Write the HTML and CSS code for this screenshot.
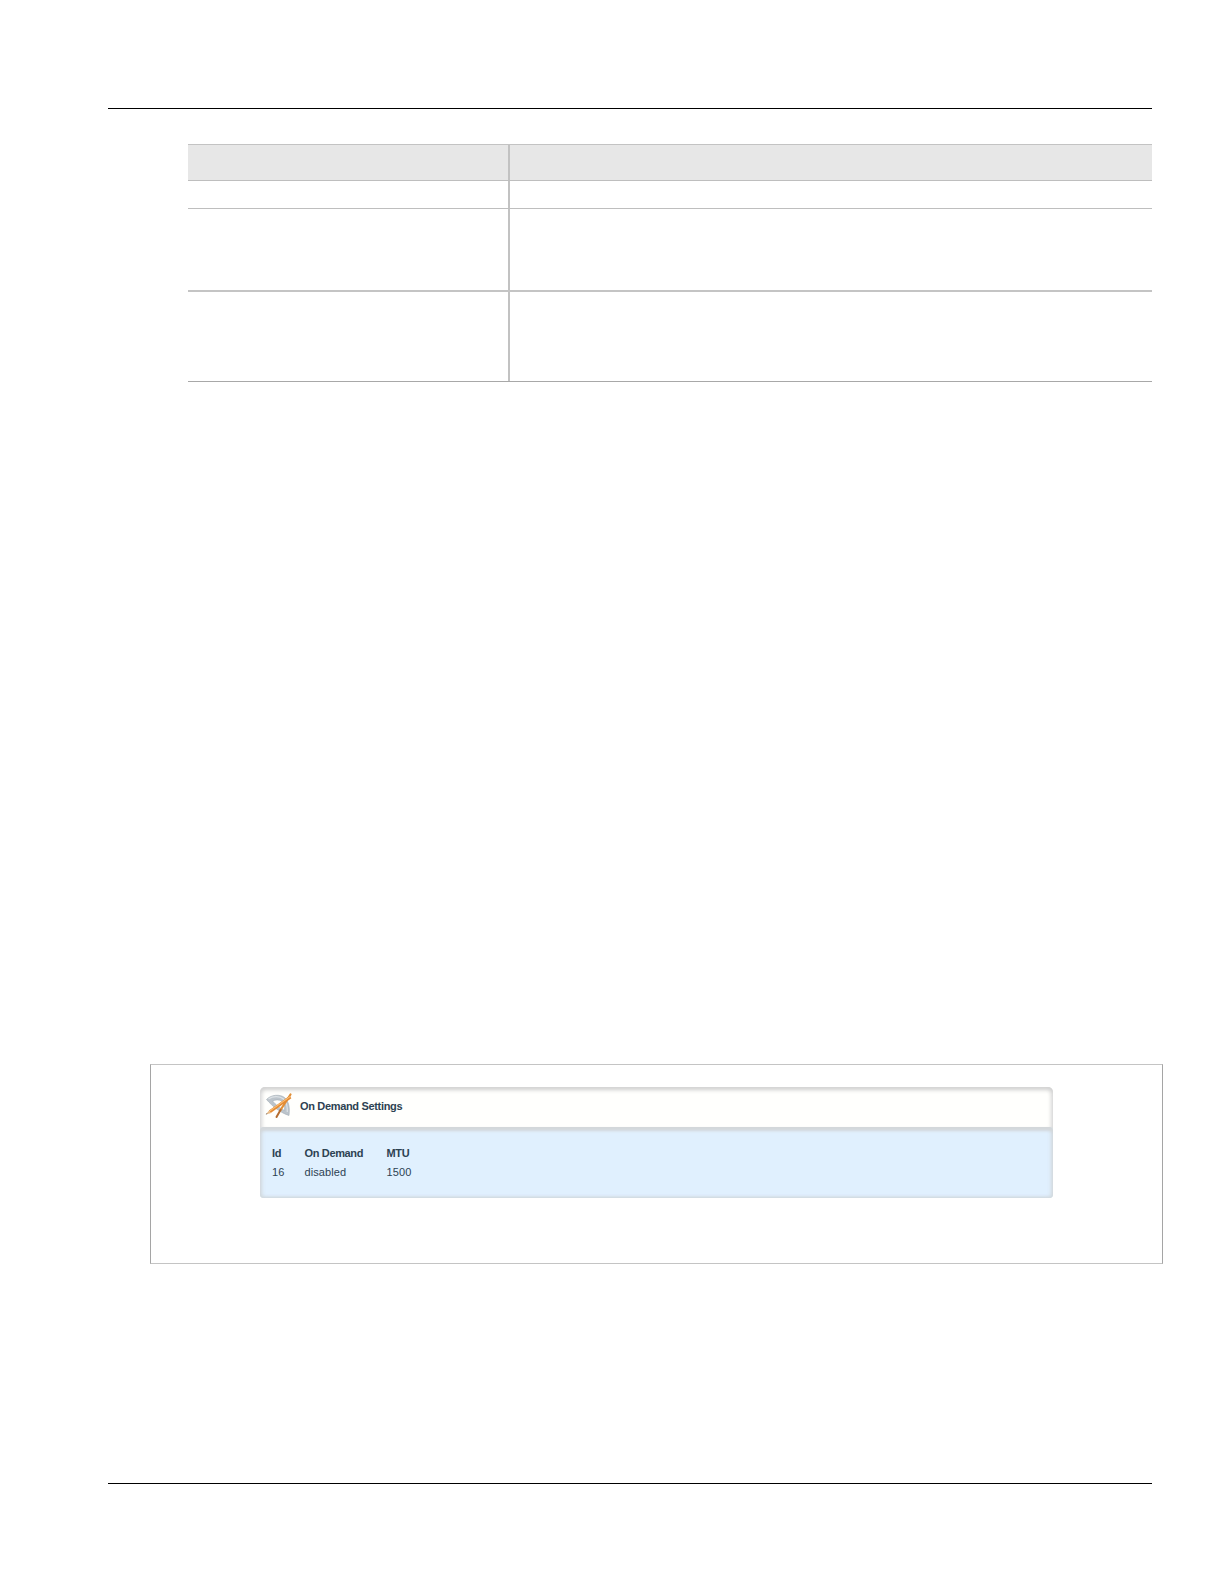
FILE: index.html
```
<!DOCTYPE html>
<html lang="en">
<head>
  <meta charset="UTF-8">
  <meta name="viewport" content="width=device-width, initial-scale=1.0">
  <title>On Demand Settings</title>
  <link rel="stylesheet" href="styles.css">
</head>
<body>

  <div class="page">
    <!-- Parameter table -->
    <div class="params">
      <div class="params-row params-head"><div class="params-name"></div><div class="params-value"></div></div>
      <div class="params-row row-short"><div class="params-name"></div><div class="params-value"></div></div>
      <div class="params-row row-medium"><div class="params-name"></div><div class="params-value"></div></div>
      <div class="params-row row-tall"><div class="params-name"></div><div class="params-value"></div></div>
    </div>

    <!-- Figure -->
    <div class="figure">
      <div class="panel">
        <div class="panel-header">
          <!-- Protractor, pencil and brush -->
          <svg class="panel-icon" width="28" height="28" viewBox="0 0 28 28">
            <path d="M1.5 7.5 C6 2.5 15 2 19.5 5.5 C24 9.5 25 16 24 23.5 C16 21 8 15 1.5 7.5 Z M7.5 9 C10.5 12.5 14.5 16 19.5 18.5 C20 14.5 19 11 16.5 9 C14 7.5 10.5 7.5 7.5 9 Z" fill="#bcc4cb" fill-rule="evenodd" stroke="#a3adb5" stroke-width="0.6"/>
            <path d="M3.5 7 C8 3.8 15 4 18.5 7 C21.5 10 22.5 14 22.3 20" fill="none" stroke="#dde2e6" stroke-width="1.2"/>
            <path d="M25.5 2.5 L15.5 18" stroke="#e08f38" stroke-width="2.2" stroke-linecap="round"/>
            <path d="M15.5 18 L11.5 25" stroke="#b56c30" stroke-width="2" stroke-linecap="round"/>
            <path d="M25.5 5 L4.8 19.8" stroke="#e58a32" stroke-width="3"/>
            <path d="M25 4.6 L4.6 19.1" stroke="#fbc077" stroke-width="1.1"/>
            <path d="M4 18.4 L1 22.2 L5.7 21.2 Z" fill="#e7b985"/>
            <path d="M1.8 21.2 L0.6 22.6 L2.6 22 Z" fill="#54473e"/>
          </svg>
          <span class="panel-title">On Demand Settings</span>
        </div>
        <div class="panel-body">
          <div class="column col-id"><b>Id</b><span>16</span></div>
          <div class="column col-demand"><b>On Demand</b><span>disabled</span></div>
          <div class="column col-mtu"><b>MTU</b><span>1500</span></div>
        </div>
      </div>
    </div>
  </div>

</body>
</html>
```
FILE: styles.css
```
/* General Styles */
* {
  box-sizing: border-box;
}

body {
  margin: 0;
  background: #ffffff;
  font-family: "Liberation Sans", Arial, sans-serif;
}

.page {
  width: 1044px;
  height: 1376px;
  margin: 108px 0 0 108px;
  border-top: 1px solid #000000;
  border-bottom: 1px solid #000000;
}

/* Parameter Table */
.params {
  margin: 35px 0 0 80px;
  border-top: 1px solid #c3c3c3;
}

.params-row {
  display: flex;
  border-bottom: 1px solid #bebebe;
}

.params-name {
  width: 322px;
  border-right: 2px solid #c2c2c2;
}

.params-head {
  height: 36px;
  background: #e7e7e7;
}

.row-short {
  height: 28px;
}

.row-medium {
  height: 83px;
  border-bottom: 2px solid #c4c4c4;
}

.row-tall {
  height: 90px;
  border-bottom-color: #a8a8a8;
}

/* Figure */
.figure {
  width: 1013px;
  height: 200px;
  margin: 682px 0 0 42px;
  padding: 22px 0 0 109px;
  border: 1px solid #c4c4c4;
  border-left-color: #a5a5a5;
  border-right-color: #a5a5a5;
}

.panel {
  width: 793px;
  color: #2d4252;
}

.panel-header {
  display: flex;
  height: 43px;
  padding: 5px 0 0 5px;
  background: #fffffd;
  border-radius: 5px 5px 0 0;
  box-shadow: inset 0 3px 4px #d2d2d2, inset 2px 0 4px #e0e0e0, inset -2px 0 4px #e0e0e0;
}

.panel-title {
  margin: 8px 0 0 7px;
  font-size: 11px;
  font-weight: bold;
  line-height: 13px;
  letter-spacing: -0.33px;
}

.panel-body {
  display: flex;
  height: 71px;
  margin-top: -3px;
  padding: 17px 0 0 12px;
  background: #e0f0fe;
  border-radius: 4px;
  box-shadow: inset 0 4px 3px #d3d7da, inset 2px 0 4px #d3dbe1, inset -2px 0 4px #d3dbe1, inset 0 -1px 2px #d3dbe1;
}

.column {
  display: flex;
  flex-direction: column;
  font-size: 11px;
  line-height: 19px;
}

.column b {
  letter-spacing: -0.35px;
}

.column span {
  letter-spacing: 0.1px;
}

.col-id {
  width: 32.5px;
}

.col-demand {
  width: 82px;
}
```
